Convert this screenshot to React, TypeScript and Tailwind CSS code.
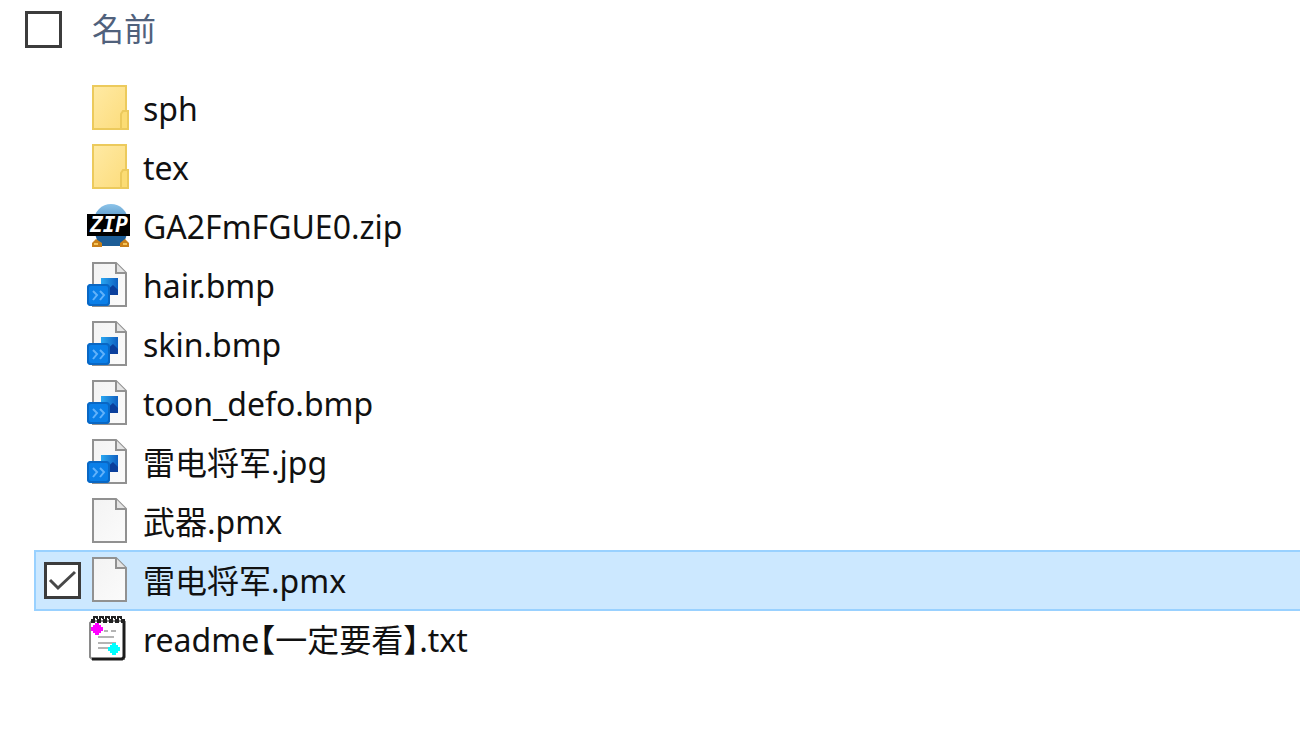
import React, { useState } from 'react'
import { clsx } from 'clsx'

type FileKind = 'folder' | 'zip' | 'image' | 'blank' | 'note'

interface FileEntry {
  name: string
  kind: FileKind
}

const files: FileEntry[] = [
  { name: 'sph', kind: 'folder' },
  { name: 'tex', kind: 'folder' },
  { name: 'GA2FmFGUE0.zip', kind: 'zip' },
  { name: 'hair.bmp', kind: 'image' },
  { name: 'skin.bmp', kind: 'image' },
  { name: 'toon_defo.bmp', kind: 'image' },
  { name: '雷电将军.jpg', kind: 'image' },
  { name: '武器.pmx', kind: 'blank' },
  { name: '雷电将军.pmx', kind: 'blank' },
  { name: 'readme【一定要看】.txt', kind: 'note' },
]

function FolderArt() {
  return (
    <g stroke="#ecca5c" strokeWidth="2">
      <rect x="8" y="1" width="33" height="43" fill="url(#folder)" />
      <path d="M36 44V29L38 26H43V44Z" fill="#fbdc74" />
    </g>
  )
}

function ZipArt() {
  return (
    <>
      <circle cx="26" cy="18" r="17" fill="url(#globe)" />
      <path d="M10 31H42L38 43H14Z" fill="#1d5d96" />
      <path d="M7 44V40L11 36L17 40V44ZM35 44V40L40 36L44 40V44Z" fill="#c98019" />
      <path d="M9 41H13M38 41H42" stroke="#f6c65a" strokeWidth="2" />
      <rect x="2" y="11" width="43" height="22" fill="#000" />
      <text
        x="24"
        y="29"
        textAnchor="middle"
        fill="#fff"
        className="[font-family:'DejaVu_Sans_Mono',monospace] text-[21px] font-bold italic"
      >
        ZIP
      </text>
    </>
  )
}

function PageArt() {
  return (
    <g stroke="#919191" strokeWidth="2">
      <path d="M8 1H31L41 11V44H8Z" fill="url(#paper)" />
      <path d="M31 1V11H41" fill="#e4e4e4" />
    </g>
  )
}

function ImageArt() {
  return (
    <>
      <PageArt />
      <rect x="16" y="16" width="17" height="17" fill="url(#photo)" />
      <path d="M22 28L28 23L33 28V33H22Z" fill="#0b3f9c" />
      <rect x="2" y="22" width="23" height="22" rx="4" fill="#0a7fe8" />
      <rect x="3" y="23" width="21" height="20" rx="3" fill="none" stroke="#0967c4" strokeWidth="2" />
      <path d="M8 29L12 33L8 38M15 29L19 33L15 38" fill="none" stroke="#62b2fa" strokeWidth="2" />
    </>
  )
}

function NoteArt() {
  return (
    <>
      <path d="M7 5H39V43H7L5 41V7Z" fill="#fff" stroke="#8a8a8a" strokeWidth="2" />
      <path d="M39 5V41L37 43H7" fill="none" stroke="#1c1c1c" strokeWidth="3" />
      {/* spiral binding */}
      <path
        d="M9 3V1H12V3M15 3V1H18V3M21 3V1H24V3M27 3V1H30V3M33 3V1H36V3M7 7V4H9V7M13 7V4H15V7M19 7V4H21V7M25 7V4H27V7M31 7V4H33V7M37 7V4H39V7"
        fill="none"
        stroke="#222"
        strokeWidth="2"
      />
      <path d="M19 15H23M26 15H31M13 21H29M13 27H31M13 32H24" stroke="#b4b4b4" strokeWidth="2" />
      <path d="M10 7H14V9H16V11H18V15H16V17H14V19H10V17H8V15H6V11H8V9H10Z" fill="#ff00ff" />
      <path d="M27 27H31V29H33V31H35V35H33V37H31V39H27V37H25V35H23V31H25V29H27Z" fill="#00ffff" />
    </>
  )
}

const art: Record<FileKind, () => React.ReactNode> = {
  folder: FolderArt,
  zip: ZipArt,
  image: ImageArt,
  blank: PageArt,
  note: NoteArt,
}

function FileIcon({ kind }: { kind: FileKind }) {
  const Art = art[kind]

  return (
    <svg viewBox="0 0 48 48" className="size-12 shrink-0" aria-hidden="true">
      <Art />
    </svg>
  )
}

// Gradients shared by every row icon
function IconDefs() {
  return (
    <svg width="0" height="0" className="absolute" aria-hidden="true">
      <defs>
        <linearGradient id="folder" x1="0" y1="0" x2="1" y2="1">
          <stop offset="0" stopColor="#ffeaa4" />
          <stop offset="1" stopColor="#fcdc7c" />
        </linearGradient>
        <linearGradient id="globe" x1="0" y1="0" x2="0" y2="1">
          <stop offset="0" stopColor="#8cc4ea" />
          <stop offset="1" stopColor="#1d5d96" />
        </linearGradient>
        <linearGradient id="paper" x1="0" y1="0" x2="1" y2="1">
          <stop offset="0" stopColor="#f3f3f3" />
          <stop offset="1" stopColor="#fbfbfb" />
        </linearGradient>
        <linearGradient id="photo" x1="0" y1="0" x2="1" y2="0">
          <stop offset="0" stopColor="#2aa8f2" />
          <stop offset="1" stopColor="#0f5fc0" />
        </linearGradient>
      </defs>
    </svg>
  )
}

interface CheckBoxProps {
  label?: string
  checked: boolean
  hidden?: boolean
  onChange: () => void
}

function CheckBox({ label, checked, hidden, onChange }: CheckBoxProps) {
  return (
    <span className={clsx('grid size-[37px] shrink-0', hidden && 'opacity-0 group-hover:opacity-100')}>
      <input
        type="checkbox"
        aria-label={label}
        checked={checked}
        onChange={onChange}
        className="col-start-1 row-start-1 size-full appearance-none border-[3px] border-[#3c3c3c] bg-white"
      />
      {checked && (
        <svg viewBox="0 0 37 37" className="pointer-events-none col-start-1 row-start-1 size-full" aria-hidden="true">
          <path d="M6 18L14 26L31 10" fill="none" stroke="#484848" strokeWidth="3" />
        </svg>
      )}
    </span>
  )
}

export default function App() {
  const [selected, setSelected] = useState<string[]>(['雷电将军.pmx'])
  const allSelected = selected.length === files.length

  const toggle = (name: string) => {
    setSelected((prev) => (prev.includes(name) ? prev.filter((n) => n !== name) : [...prev, name]))
  }

  const toggleAll = () => {
    setSelected(allSelected ? [] : files.map((file) => file.name))
  }

  return (
    <main className="min-h-screen overflow-x-hidden bg-white text-[32px] leading-10 text-[#111] [font-family:'Noto_Sans','Noto_Sans_CJK_JP','Noto_Sans_CJK_SC',sans-serif]">
      <IconDefs />
      <header className="flex items-center gap-[30px] pt-[9px] pb-[29px] pl-[25px]">
        <CheckBox label="すべて選択" checked={allSelected} onChange={toggleAll} />
        <button type="button" className="text-[#50617c]">
          名前
        </button>
      </header>
      <ul className="flex flex-col pl-[34px]">
        {files.map((file) => {
          const isSelected = selected.includes(file.name)

          return (
            <li key={file.name} className="-mb-0.5">
              <label
                className={clsx(
                  'group flex h-[61px] items-center gap-1 border-y-2 border-l-2 pl-2',
                  isSelected ? 'border-[#99d1ff] bg-[#cce8ff]' : 'border-transparent'
                )}
              >
                <CheckBox checked={isSelected} hidden={!isSelected} onChange={() => toggle(file.name)} />
                <FileIcon kind={file.kind} />
                <span className="ml-1.5 whitespace-nowrap [font-feature-settings:'halt']">{file.name}</span>
              </label>
            </li>
          )
        })}
      </ul>
    </main>
  )
}
